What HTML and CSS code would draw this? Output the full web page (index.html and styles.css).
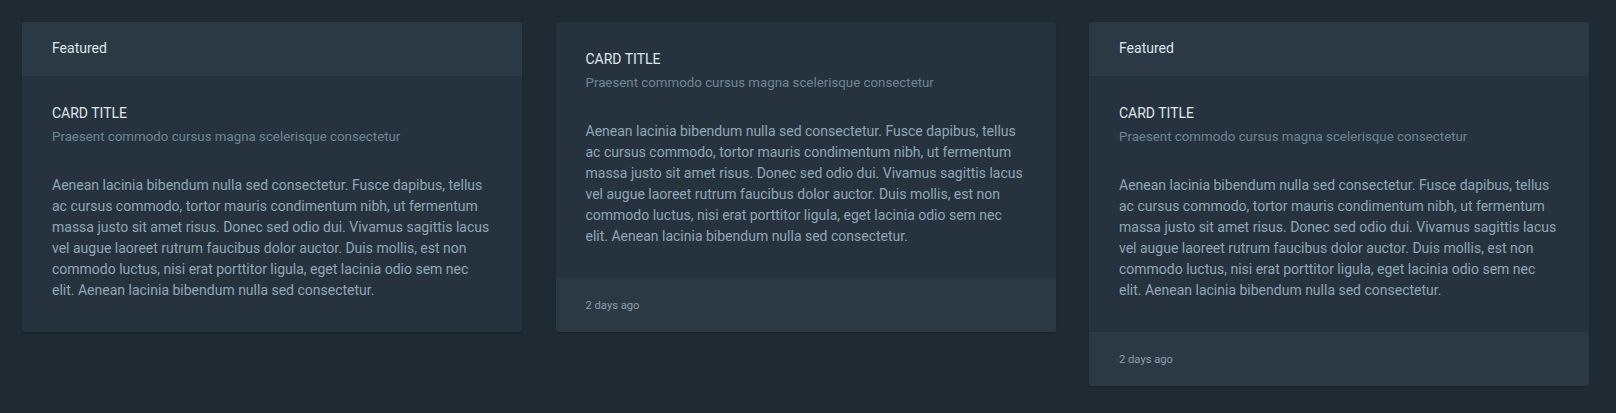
FILE: index.html
```html
<!DOCTYPE html>
<html lang="en">
<head>
<meta charset="utf-8">
<title>Cards</title>
<link rel="stylesheet" href="styles.css">
</head>
<body>
<div class="cards">
  <div class="card">
    <div class="card-header">Featured</div>
    <div class="card-body">
      <h5 class="card-title">Card title</h5>
      <h6 class="card-subtitle">Praesent commodo cursus magna scelerisque consectetur</h6>
      <p class="card-text">Aenean lacinia bibendum nulla sed consectetur. Fusce dapibus, tellus ac cursus commodo, tortor mauris condimentum nibh, ut fermentum massa justo sit amet risus. Donec sed odio dui. Vivamus sagittis lacus vel augue laoreet rutrum faucibus dolor auctor. Duis mollis, est non commodo luctus, nisi erat porttitor ligula, eget lacinia odio sem nec elit. Aenean lacinia bibendum nulla sed consectetur.</p>
    </div>
  </div>
  <div class="card">
    <div class="card-body">
      <h5 class="card-title">Card title</h5>
      <h6 class="card-subtitle">Praesent commodo cursus magna scelerisque consectetur</h6>
      <p class="card-text">Aenean lacinia bibendum nulla sed consectetur. Fusce dapibus, tellus ac cursus commodo, tortor mauris condimentum nibh, ut fermentum massa justo sit amet risus. Donec sed odio dui. Vivamus sagittis lacus vel augue laoreet rutrum faucibus dolor auctor. Duis mollis, est non commodo luctus, nisi erat porttitor ligula, eget lacinia odio sem nec elit. Aenean lacinia bibendum nulla sed consectetur.</p>
    </div>
    <div class="card-footer">2 days ago</div>
  </div>
  <div class="card">
    <div class="card-header">Featured</div>
    <div class="card-body">
      <h5 class="card-title">Card title</h5>
      <h6 class="card-subtitle">Praesent commodo cursus magna scelerisque consectetur</h6>
      <p class="card-text">Aenean lacinia bibendum nulla sed consectetur. Fusce dapibus, tellus ac cursus commodo, tortor mauris condimentum nibh, ut fermentum massa justo sit amet risus. Donec sed odio dui. Vivamus sagittis lacus vel augue laoreet rutrum faucibus dolor auctor. Duis mollis, est non commodo luctus, nisi erat porttitor ligula, eget lacinia odio sem nec elit. Aenean lacinia bibendum nulla sed consectetur.</p>
    </div>
    <div class="card-footer">2 days ago</div>
  </div>
</div>
</body>
</html>
```

FILE: styles.css
```css
html, body {
  margin: 0;
  padding: 0;
}

body {
  background: #1f2a33;
  font-family: Roboto, "Liberation Sans", sans-serif;
  font-size: 14px;
  color: #8fa7b7;
}

.cards {
  display: grid;
  grid-template-columns: repeat(3, 500px);
  column-gap: 33.5px;
  align-items: start;
  padding: 22px 0 22px 22px;
}

.card {
  background: #26333e;
  border-radius: 3px;
  overflow: hidden;
  box-shadow: 0 1px 2px rgba(0, 0, 0, 0.18);
}

.card-header {
  background: #2a3944;
  color: #dce5ea;
  font-size: 14px;
  line-height: 20px;
  padding: 16px 30px 18px;
}

.card-body {
  padding: 30px 30px 31px;
}

.card-title {
  margin: 0;
  font-size: 14px;
  font-weight: 400;
  line-height: 15px;
  text-transform: uppercase;
  color: #dfe7eb;
}

.card-subtitle {
  margin: 7px 0 0;
  font-size: 13.3px;
  font-weight: 400;
  line-height: 18px;
  color: #6e8696;
}

.card-text {
  margin: 29px 0 0;
  font-size: 14px;
  line-height: 21px;
  color: #8fa7b7;
}

.card-footer {
  background: #2a3944;
  color: #8a9fac;
  font-size: 11.2px;
  line-height: 20px;
  padding: 18px 30px 16px;
}
```
